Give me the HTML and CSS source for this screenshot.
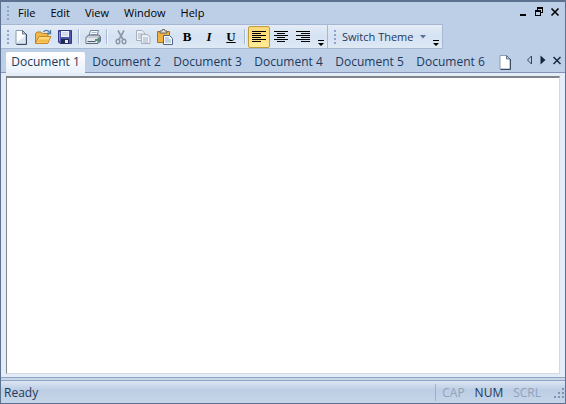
FILE: index.html
```html
<!DOCTYPE html>
<html lang="en">

<head>
    <meta charset="UTF-8">
    <meta name="viewport" content="width=device-width, initial-scale=1.0">
    <title>Document 1</title>
    <link rel="stylesheet" href="styles.css">
</head>

<body>

    <div class="window">
        <header class="menubar">
            <span class="grip"></span>
            <nav class="menu">
                <button type="button">File</button>
                <button type="button">Edit</button>
                <button type="button">View</button>
                <button type="button">Window</button>
                <button type="button">Help</button>
            </nav>
            <div class="window-controls">
                <button type="button" aria-label="Minimize">
                    <svg width="10" height="10" viewBox="0 0 10 10"><path d="M2 7h6v2H2z"/></svg>
                </button>
                <button type="button" aria-label="Restore">
                    <svg width="10" height="10" viewBox="0 0 10 10" shape-rendering="crispEdges"><path d="M3 0h6v6H7V5h1V2H4v1H3zM1 3h6v6H1zm1 2v3h4V5z" fill-rule="evenodd"/></svg>
                </button>
                <button type="button" aria-label="Close">
                    <svg width="10" height="10" viewBox="0 0 10 10"><path d="M1.5 1.5l7 7M8.5 1.5l-7 7" stroke="#000" stroke-width="1.6"/></svg>
                </button>
            </div>
        </header>

        <div class="toolbars">
            <div class="toolbar">
                <span class="grip"></span>
                <button type="button" class="btn-tool" aria-label="New">
                    <svg width="16" height="16" viewBox="0 0 16 16">
                        <path d="M3 1.5h6.5l3.5 3.5v10H3z" fill="#fff" stroke="#8a9bb5"/>
                        <path d="M13.5 5v10.5H3.5" fill="none" stroke="#3b4a63"/>
                        <path d="M9.5 1.5V5H13z" fill="#c4d0e2" stroke="#4c5c78" stroke-width=".8"/>
                        <path d="M4 13l8-6v7H4z" fill="#dce6f3"/>
                    </svg>
                </button>
                <button type="button" class="btn-tool" aria-label="Open">
                    <svg width="18" height="16" viewBox="0 0 18 16">
                        <path d="M1.5 14V4.5L3 3h4l1.5 1.5H14V14z" fill="#f0b84a" stroke="#b9812a"/>
                        <path d="M1.5 14.5L5 7.5h12l-3.5 7z" fill="#ffd878" stroke="#c48a2c"/>
                        <path d="M3.500 13.500h9.500l1.500-3H5z" fill="#f5b94a"/>
                        <path d="M9.5 3C11 .8 14 .8 15.5 3.5M16.5 1v3.5H13" fill="none" stroke="#4d78a8" stroke-width="1.3"/>
                    </svg>
                </button>
                <button type="button" class="btn-tool" aria-label="Save">
                    <svg width="16" height="16" viewBox="0 0 16 16">
                        <path d="M1.5 1.5h13v13H3L1.5 13z" fill="#4c55a8" stroke="#303784"/>
                        <path d="M4 2h8v6H4z" fill="#eef2fb"/>
                        <path d="M5 4h6M5 6h6" stroke="#b7c0dc"/>
                        <path d="M4 10h8v4.5H4z" fill="#23284f"/>
                        <path d="M8 11h3v3H8z" fill="#e6eaf6"/>
                        <path d="M2.5 3v9" stroke="#8c94d6"/>
                    </svg>
                </button>
                <span class="separator"></span>
                <button type="button" class="btn-tool" aria-label="Print">
                    <svg width="16" height="16" viewBox="0 0 16 16">
                        <path d="M5.5 1.5h8L11.5 8h-8z" fill="#f8fbff" stroke="#74859c"/>
                        <path d="M6.5 3.5h5M6 5.5h5" stroke="#a8b8cc"/>
                        <path d="M1 8.5L3.5 6H14l1.5 2v4L13 14.5H1z" fill="#c5cdd8" stroke="#5a687c"/>
                        <path d="M1.5 9h11v5h-11z" fill="#e3e8ef"/>
                        <path d="M12.500 9l3-1.500v4.500l-3 2.500z" fill="#728398"/>
                        <path d="M2.500 12.500h8" stroke="#4d5868"/>
                        <path d="M10 10h3v2h-3z" fill="#42a35a"/>
                    </svg>
                </button>
                <span class="separator"></span>
                <button type="button" class="btn-tool" aria-label="Cut" disabled>
                    <svg width="16" height="16" viewBox="0 0 16 16" fill="none" stroke="#8c98a8">
                        <path d="M5 1.5l5 9M11 1.5l-5 9" stroke-width="1.6"/>
                        <ellipse cx="5" cy="12.5" rx="1.8" ry="2.3" stroke-width="1.5"/>
                        <ellipse cx="11" cy="12.5" rx="1.8" ry="2.3" stroke-width="1.5"/>
                    </svg>
                </button>
                <button type="button" class="btn-tool" aria-label="Copy" disabled>
                    <svg width="16" height="16" viewBox="0 0 16 16" fill="#eef3f9" stroke="#a5b0bf">
                        <path d="M1.5 1.5H7L9.5 4v7.5h-8z"/>
                        <path d="M3 5h5M3 7h5M3 9h5"/>
                        <path d="M6.5 5.5H12L15 8v6.500H6.500z"/>
                        <path d="M8 9h5M8 11h5M8 13h5"/>
                    </svg>
                </button>
                <button type="button" class="btn-tool" aria-label="Paste">
                    <svg width="16" height="16" viewBox="0 0 16 16">
                        <path d="M.5 2.500h12v11H.5z" fill="#eeb143" stroke="#a8701d"/>
                        <path d="M3 4V2h2l.5-1.500h2L8 2h2v2z" fill="#dfe4ec" stroke="#6d6451"/>
                        <path d="M6.5 6.500h6l3 3v6h-9z" fill="#f7faff" stroke="#4e6485"/>
                        <path d="M8 9h4M8 11h6M8 13h6" stroke="#8fa6c8"/>
                    </svg>
                </button>
                <button type="button" class="btn-tool btn-format"><b>B</b></button>
                <button type="button" class="btn-tool btn-format"><i>I</i></button>
                <button type="button" class="btn-tool btn-format"><u>U</u></button>
                <span class="separator"></span>
                <button type="button" class="btn-tool active" aria-label="Align left" aria-pressed="true">
                    <svg width="16" height="12" viewBox="0 0 16 12" stroke="#000"><path d="M1 .5h14M1 2.5h9M1 4.5h14M1 6.5h9M1 8.5h14M1 10.5h9"/></svg>
                </button>
                <button type="button" class="btn-tool" aria-label="Center">
                    <svg width="16" height="12" viewBox="0 0 16 12" stroke="#000"><path d="M1 .5h14M4 2.5h8M1 4.5h14M4 6.5h8M1 8.5h14M4 10.5h8"/></svg>
                </button>
                <button type="button" class="btn-tool" aria-label="Align right">
                    <svg width="16" height="12" viewBox="0 0 16 12" stroke="#000"><path d="M1 .5h14M6 2.5h9M1 4.5h14M6 6.5h9M1 8.5h14M6 10.5h9"/></svg>
                </button>
                <button type="button" class="btn-overflow" aria-label="Toolbar options">
                    <svg width="6" height="6" viewBox="0 0 6 6"><path d="M0 0h6v1H0zM0 3h6L3 6z"/></svg>
                </button>
            </div>
            <div class="toolbar">
                <span class="grip"></span>
                <button type="button" class="btn-theme">
                    Switch Theme
                    <svg width="6" height="4" viewBox="0 0 6 4"><path d="M0 0h6L3 3.5z"/></svg>
                </button>
                <button type="button" class="btn-overflow" aria-label="Toolbar options">
                    <svg width="6" height="6" viewBox="0 0 6 6"><path d="M0 0h6v1H0zM0 3h6L3 6z"/></svg>
                </button>
            </div>
        </div>

        <div class="tabbar">
            <div class="tabs">
                <button type="button" class="tab active">Document 1</button>
                <button type="button" class="tab">Document 2</button>
                <button type="button" class="tab">Document 3</button>
                <button type="button" class="tab">Document 4</button>
                <button type="button" class="tab">Document 5</button>
                <button type="button" class="tab">Document 6</button>
                <button type="button" class="tab-new" aria-label="New document">
                    <svg width="16" height="16" viewBox="0 0 16 16">
                        <path d="M3 1.5h6.5L13 5v10H3z" fill="#fff" stroke="#8a9bb5"/>
                        <path d="M13.5 5v10.5H3.5" fill="none" stroke="#3b4a63"/>
                        <path d="M9.5 1.5V5H13z" fill="#c4d0e2" stroke="#4c5c78" stroke-width=".8"/>
                    </svg>
                </button>
            </div>
            <div class="tab-controls">
                <button type="button" aria-label="Previous tab">
                    <svg width="8" height="10" viewBox="0 0 8 10"><path d="M6.5 1v8L2.5 5z" fill="none" stroke="#33415c"/></svg>
                </button>
                <button type="button" aria-label="Next tab">
                    <svg width="8" height="10" viewBox="0 0 8 10"><path d="M1.5 .5v9L6.5 5z" fill="#17253f"/></svg>
                </button>
                <button type="button" aria-label="Close tab">
                    <svg width="8" height="10" viewBox="0 0 8 10"><path d="M.5 2l7 7M7.5 2l-7 7" stroke="#17253f" stroke-width="1.5"/></svg>
                </button>
            </div>
        </div>

        <main class="workspace">
            <textarea class="editor" aria-label="Document 1"></textarea>
        </main>

        <footer class="statusbar">
            <span class="status-text">Ready</span>
            <div class="indicators">
                <span>CAP</span>
                <span class="on">NUM</span>
                <span>SCRL</span>
            </div>
            <svg class="size-grip" width="12" height="12" viewBox="0 0 12 12" fill="#8093b3"><path d="M9 1h2v2H9zM5 5h2v2H5zM9 5h2v2H9zM1 9h2v2H1zM5 9h2v2H5zM9 9h2v2H9z"/></svg>
        </footer>
    </div>

</body>

</html>
```
FILE: styles.css
```css
* {
    box-sizing: border-box;
}

body {
    margin: 0;
    font-family: "Open Sans", "Noto Sans", sans-serif;
    font-size: 12px;
    color: #1e395b;
}

button {
    margin: 0;
    padding: 0;
    border: none;
    background: none;
    color: inherit;
    font: inherit;
    white-space: nowrap;
}

svg {
    display: block;
    flex: none;
}

.window {
    display: flex;
    flex-direction: column;
    height: 100vh;
    border: 1px solid #5d7290;
    border-top-width: 2px;
    background-color: #bdcfe7;
}

.grip {
    width: 2px;
    height: 14px;
    flex: none;
    background: repeating-linear-gradient(#8ba3cf 0 2px, transparent 2px 4px);
}

/* Menu */

.menubar {
    display: flex;
    align-items: center;
    height: 22px;
    padding: 0 5px 0 6px;
    color: #000;
}

.menu {
    display: flex;
    flex: 1;
    gap: 15px;
    padding: 0 0 1px 9px;
    font-size: 11px;
}

.window-controls {
    display: flex;
    gap: 6px;
    padding-bottom: 2px;
}

/* Toolbars */

.toolbars {
    display: flex;
    height: 26px;
}

.toolbar {
    display: flex;
    align-items: center;
    height: 25px;
    padding-left: 6px;
    border: 1px solid #a5b7d3;
    border-left: none;
    background: linear-gradient(#e4ecf7, #d5e2f2 50%, #dfe9f6);
}

.toolbar .grip {
    margin-right: 1px;
}

.btn-tool {
    display: flex;
    align-items: center;
    justify-content: center;
    width: 22px;
    height: 22px;
}

.btn-tool.active {
    border: 1px solid #c29b3d;
    border-radius: 2px;
    background: linear-gradient(#fbd97c, #ffe07a 50%, #ffec9a);
}

.btn-format {
    color: #000;
    font-family: "Liberation Serif", serif;
    font-size: 13px;
    font-weight: bold;
}

.separator {
    width: 1px;
    height: 15px;
    margin: 0 3px 0 2px;
    background-color: #a5b7d3;
    box-shadow: 1px 0 #f4f8fd;
}

.btn-overflow {
    display: flex;
    align-items: flex-end;
    justify-content: center;
    width: 13px;
    height: 100%;
    padding-bottom: 2px;
}

.btn-theme {
    display: flex;
    align-items: center;
    gap: 7px;
    padding: 0 3px 0 5px;
    font-size: 11px;
    fill: #5d7290;
}

/* Tabs */

.tabbar {
    display: flex;
    justify-content: space-between;
    height: 23px;
    padding: 2px 4px 0 5px;
    border-bottom: 1px solid #8095b5;
}

.tabs {
    display: flex;
}

.tab {
    width: 81px;
    padding-bottom: 2px;
}

.tab.active {
    width: 79px;
    margin: 0 1px -1px 0;
    border-radius: 2px 2px 0 0;
    background: linear-gradient(#fff, #e9f1fb);
}

.tab-new {
    padding: 0 0 0 6px;
}

.tab-controls {
    display: flex;
    align-items: center;
    gap: 6px;
    padding-bottom: 4px;
}

/* Document */

.workspace {
    display: flex;
    flex: 1;
    padding: 3px 5px 3px 5px;
    background-color: #e3ecf7;
}

.editor {
    flex: 1;
    border: 1px solid #d3d9e0;
    border-top: 2px solid #7f8488;
    border-left: 1px solid #7f8488;
    outline: none;
    background-color: #fff;
    resize: none;
}

/* Status bar */

.statusbar {
    display: flex;
    align-items: center;
    height: 26px;
    padding: 5px 0 0 3px;
    background: linear-gradient(#8fa4c4 1px, #c8d6ea 1px 3px, #8fa4c4 3px 4px, #dce6f3 4px, #bccde4 50%, #c6d5e9);
}

.status-text {
    flex: 1;
}

.indicators {
    display: flex;
    gap: 10px;
    padding: 0 12px 0 6px;
    border-left: 1px solid #9db0cd;
    color: #91a2bb;
}

.indicators .on {
    color: #1e395b;
}
```
